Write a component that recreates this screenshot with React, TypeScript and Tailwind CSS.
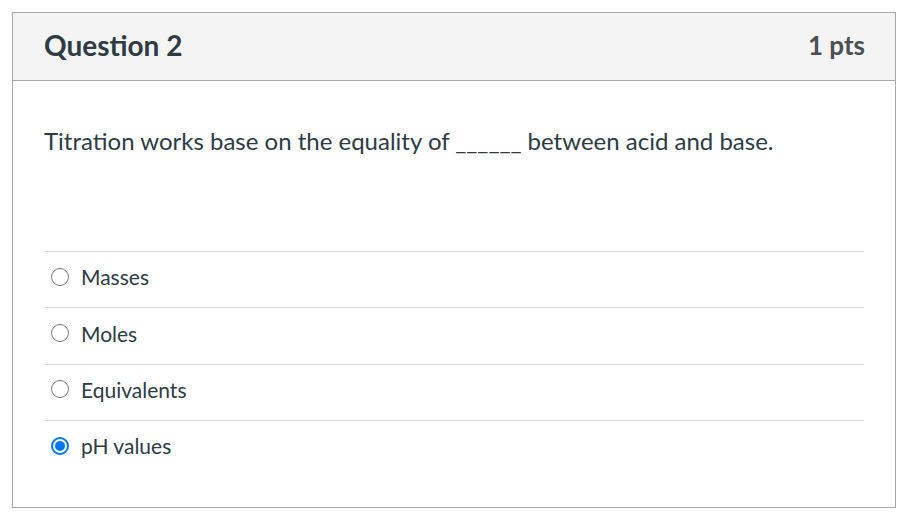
import React from "react";

const options = [
  { label: "Masses", selected: false },
  { label: "Moles", selected: false },
  { label: "Equivalents", selected: false },
  { label: "pH values", selected: true },
];

export default function App() {
  return (
    <div className="w-[914px] h-[519px] bg-white pt-[12px] pl-[12px]" style={{ fontFamily: "Lato, 'Noto Sans', sans-serif" }}>
      <div className="w-[884px] h-[496px] border border-[#a8a8a8] flex flex-col">
        <div className="h-[68px] bg-[#f4f4f4] border-b border-[#a8a8a8] flex items-center justify-between pl-[31px] pr-[30px] pb-[3px]">
          <div className="text-[28px] font-bold text-[#2d3b45] leading-none">Question 2</div>
          <div className="text-[26px] font-bold text-[#4a4f52] leading-none">1 pts</div>
        </div>
        <div className="px-[31px] pt-[43px]">
          <p className="text-[24px] text-[#2d3b45] leading-[34px]">
            Titration works base on the equality of ______ between acid and base.
          </p>
          <div className="mt-[93px]">
            {options.map((o) => (
              <div key={o.label} className="h-[56.4px] border-t border-[#dcdcdc] flex items-center gap-[12px] pl-[7px] pb-[6px]">
                {o.selected ? (
                  <div className="w-[18px] h-[18px] rounded-full bg-[#0075ff] flex items-center justify-center">
                    <div className="w-[14px] h-[14px] rounded-full bg-white flex items-center justify-center">
                      <div className="w-[10px] h-[10px] rounded-full bg-[#0075ff]" />
                    </div>
                  </div>
                ) : (
                  <div className="w-[18px] h-[18px] rounded-full border-[1.5px] border-[#767676] bg-white" />
                )}
                <span className="text-[21px] text-[#2d3b45] leading-none">{o.label}</span>
              </div>
            ))}
          </div>
        </div>
      </div>
    </div>
  );
}
